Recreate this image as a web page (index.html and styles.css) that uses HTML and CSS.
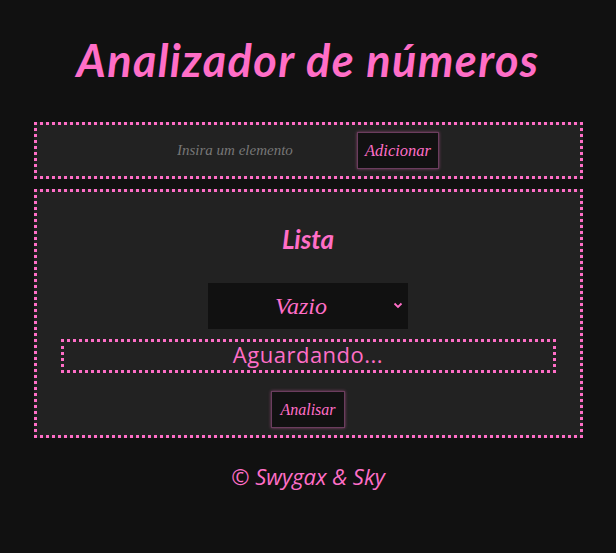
FILE: index.html
```html
<!DOCTYPE html>
<html lang="pt-BR">
<head>
<meta charset="utf-8">
<title>Analizador de números</title>
<link rel="stylesheet" href="styles.css">
</head>
<body>
<h1 class="title">Analizador de números</h1>
<main class="wrap">
  <section class="box entry">
    <input class="field" type="number" placeholder="Insira um elemento">
    <button class="btn" type="button">Adicionar</button>
  </section>
  <section class="box list">
    <h2 class="list-title">Lista</h2>
    <div class="picker-wrap">
      <select class="picker">
        <option>Vazio</option>
      </select>
      <svg class="chev" width="10" height="7" viewBox="0 0 10 7" aria-hidden="true"><path d="M1.5 1.5 L5 5 L8.5 1.5" fill="none" stroke="#ff6ec7" stroke-width="1.8"/></svg>
    </div>
    <div class="result">Aguardando...</div>
    <button class="btn" type="button">Analisar</button>
  </section>
</main>
<footer class="foot">© Swygax &amp; Sky</footer>
</body>
</html>
```
FILE: styles.css
```css
html, body {
  margin: 0;
  background: #111111;
}
body {
  font-family: Lato, "Open Sans", sans-serif;
  color: #ff6ec7;
}
.title {
  margin: 0;
  padding-top: 33px;
  height: 122px;
  box-sizing: border-box;
  text-align: center;
  font-size: 45px;
  line-height: 54px;
  letter-spacing: 1.4px;
  font-weight: 700;
  font-style: italic;
}
.wrap {
  width: 549px;
  margin: 0 auto;
  display: flex;
  flex-direction: column;
  gap: 10px;
}
.box {
  border: 3px dotted #ff6ec7;
  background: #222222;
}
.entry {
  height: 57px;
  box-sizing: border-box;
  display: flex;
  justify-content: center;
  align-items: center;
  gap: 4px;
}
.field {
  width: 176px;
  padding: 0;
  border: none;
  outline: none;
  background: transparent;
  color: #ff6ec7;
  font-family: "Liberation Serif", serif;
  font-style: italic;
  font-size: 15px;
}
.field::placeholder {
  color: #777777;
}
.btn {
  background: #111111;
  color: #ff6ec7;
  border: 1px solid #6b3d5e;
  box-shadow: 0 0 3px rgba(255, 110, 199, 0.45);
  font-family: "Liberation Serif", serif;
  font-style: italic;
  font-size: 16.5px;
  padding: 0 7px;
  height: 37px;
}
.list {
  height: 249px;
  box-sizing: border-box;
  display: flex;
  flex-direction: column;
  align-items: center;
}
.list-title {
  margin: 0;
  padding-top: 31px;
  height: 91px;
  box-sizing: border-box;
  font-size: 26px;
  line-height: 32px;
  font-weight: 700;
  font-style: italic;
}
.picker-wrap {
  position: relative;
  width: 200px;
  height: 46px;
}
.picker {
  appearance: none;
  -webkit-appearance: none;
  width: 200px;
  height: 46px;
  border: none;
  outline: none;
  border-radius: 0;
  background: #111111;
  color: #ff6ec7;
  font-family: "Liberation Serif", serif;
  font-style: italic;
  font-size: 24px;
  text-align: center;
  text-align-last: center;
  padding: 0 14px 0 0;
}
.chev {
  position: absolute;
  right: 5px;
  top: 19px;
}
.result {
  align-self: stretch;
  margin: 10px 24px 0;
  height: 34px;
  box-sizing: border-box;
  border: 3px dotted #ff6ec7;
  text-align: center;
  font-family: "Open Sans", sans-serif;
  font-weight: 400;
  font-size: 22px;
  letter-spacing: 0.5px;
  line-height: 25px;
}
.list .btn {
  margin-top: 18px;
  height: 37px;
  padding: 0 8px;
  font-size: 16px;
}
.foot {
  text-align: center;
  padding-top: 23px;
  font-family: "Open Sans", sans-serif;
  font-size: 22px;
  line-height: 30px;
  font-style: italic;
}
```
